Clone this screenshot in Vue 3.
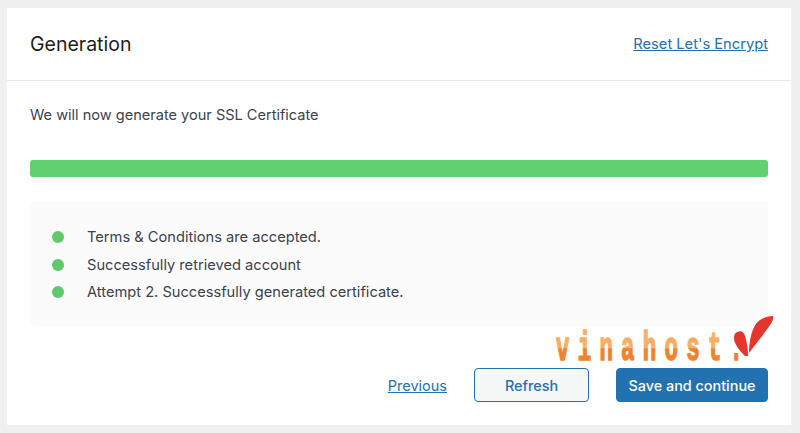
<script setup>
const steps = [
  'Terms & Conditions are accepted.',
  'Successfully retrieved account',
  'Attempt 2. Successfully generated certificate.'
]
</script>

<template>
  <div class="page">
    <section class="card">
      <header class="head">
        <h2 class="title">Generation</h2>
        <a class="link" href="#">Reset Let's Encrypt</a>
      </header>
      <div class="body">
        <p class="intro">We will now generate your SSL Certificate</p>
        <div class="bar"></div>
        <ul class="list">
          <li v-for="s in steps" :key="s" class="item">
            <span class="dot"></span>
            <span>{{ s }}</span>
          </li>
        </ul>
        <footer class="actions">
          <a class="link prev" href="#">Previous</a>
          <button class="btn outline">Refresh</button>
          <button class="btn solid">Save and continue</button>
        </footer>
      </div>
    </section>
    <svg class="logo" width="230" height="70" viewBox="550 310 230 70">
      <defs>
        <linearGradient id="vh" gradientUnits="userSpaceOnUse" x1="0" y1="-30" x2="0" y2="0">
          <stop offset="0" stop-color="#f9ae62" />
          <stop offset="0.62" stop-color="#f9ae62" />
          <stop offset="0.64" stop-color="#f07f28" />
          <stop offset="1" stop-color="#f08430" />
        </linearGradient>
      </defs>
      <text
        class="logo-text"
        transform="translate(556 359.5) scale(.56 1)"
        fill="url(#vh)"
        stroke="url(#vh)"
        stroke-width="1.6"
      >vinahost.</text>
      <path d="M737 332C741 330 744 332 745 336C747 342 748 349 748 356L745 356C740 351 734 344 734 338C734 335 735 333 737 332Z" fill="#e5352d" />
      <path d="M773 316C766 316 760 319 756 324C751 331 749 343 749 353C755 345 763 335 768 328C771 324 774 320 773 316Z" fill="#e5352d" />
    </svg>
  </div>
</template>

<style>
html, body { margin: 0; background: #f0f0f1; }
</style>

<style scoped>
.page {
  position: relative;
  width: 800px;
  height: 433px;
  box-sizing: border-box;
  padding: 8px 9px 8px 7px;
  background: #f0f0f1;
  font-family: Inter, "Liberation Sans", sans-serif;
  overflow: hidden;
}
.card {
  height: 417px;
  background: #fff;
  display: flex;
  flex-direction: column;
}
.head {
  height: 73px;
  box-sizing: border-box;
  border-bottom: 1px solid #e8e8ea;
  padding: 0 23px;
  display: flex;
  align-items: center;
  justify-content: space-between;
}
.title {
  margin: 0;
  font-size: 19.5px;
  font-weight: 400;
  color: #1e1e20;
}
.link {
  font-size: 14.7px;
  color: #2271b1;
  text-decoration: underline;
}
.body {
  padding: 0 23px;
  display: flex;
  flex-direction: column;
  flex: 1;
}
.intro {
  margin: 25px 0 0;
  font-size: 14.55px;
  line-height: 18px;
  color: #3c434a;
}
.bar {
  margin-top: 36px;
  height: 17px;
  border-radius: 3px;
  background: #61d070;
}
.list {
  margin: 24px 0 0;
  height: 125px;
  box-sizing: border-box;
  padding: 22.5px 22px 0;
  list-style: none;
  background: #fbfbfb;
  border-radius: 4px;
}
.item {
  height: 27.5px;
  display: flex;
  align-items: center;
  gap: 23px;
  font-size: 14.65px;
  color: #3c434a;
}
.dot {
  width: 12px;
  height: 12px;
  border-radius: 50%;
  background: #61c86c;
  flex: none;
}
.actions {
  margin-top: 42px;
  display: flex;
  align-items: center;
  justify-content: flex-end;
}
.prev {
  margin-right: 27px;
  font-size: 14.5px;
}
.btn {
  height: 34px;
  box-sizing: border-box;
  border-radius: 4px;
  font-family: inherit;
  font-size: 14.4px;
  font-weight: 500;
}
.outline {
  width: 115px;
  margin-right: 27px;
  background: #f6f7f7;
  border: 1px solid #2271b1;
  color: #2271b1;
}
.solid {
  width: 152px;
  background: #2271b1;
  border: 1px solid #2271b1;
  color: #fff;
}
.logo {
  position: absolute;
  left: 550px;
  top: 310px;
  pointer-events: none;
}
.logo-text {
  font-family: "Liberation Mono", monospace;
  font-weight: 700;
  font-size: 40px;
  letter-spacing: 14.75px;
}
</style>
